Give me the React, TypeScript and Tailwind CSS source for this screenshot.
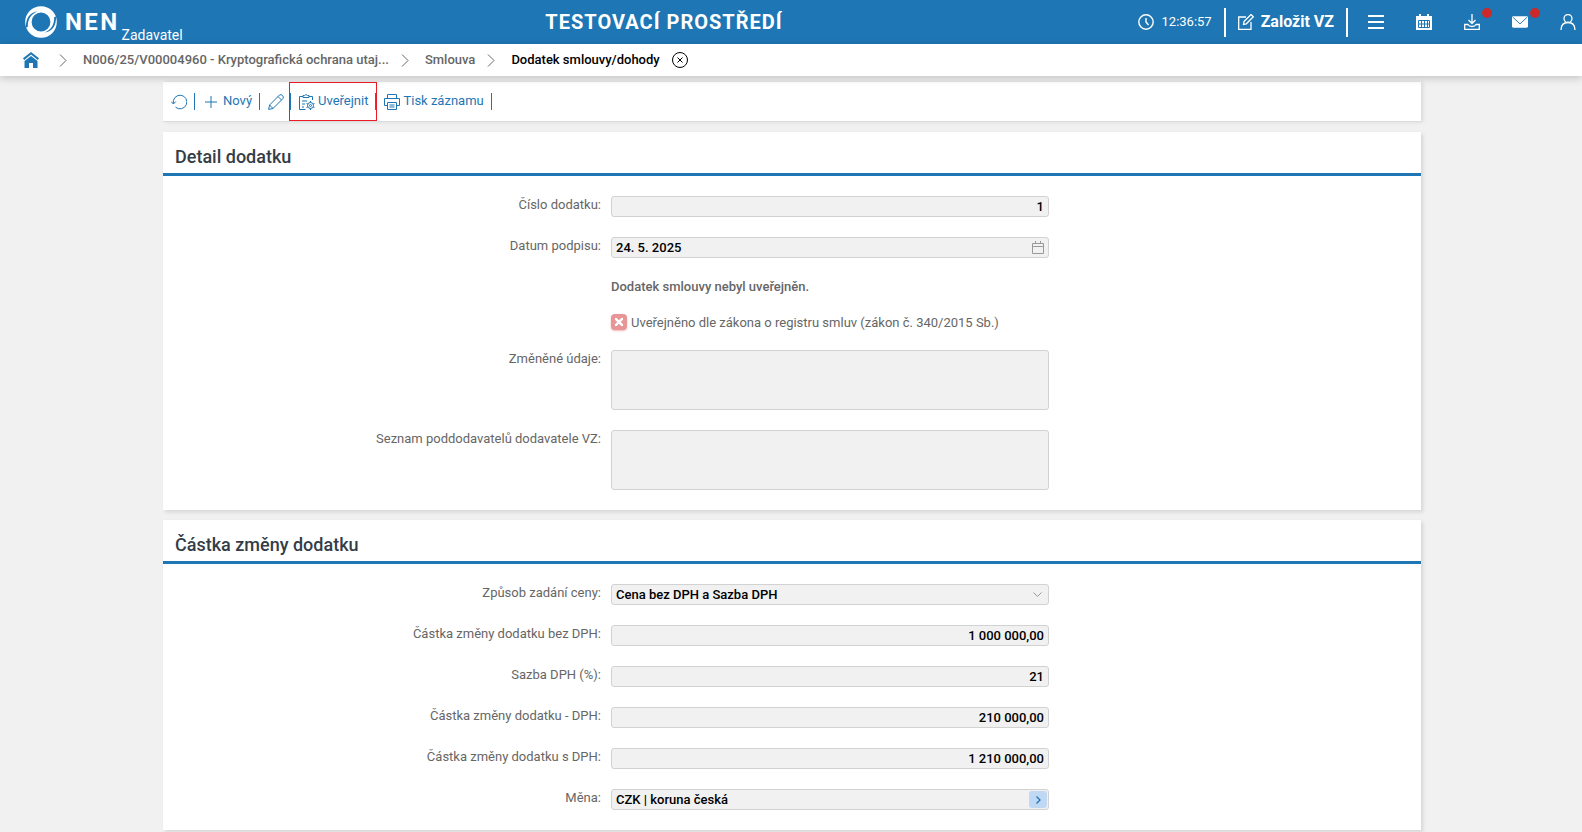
import React from 'react';

interface FieldProps {
  id: string;
  label: string;
  children: React.ReactNode;
}

interface CrumbProps {
  text: string;
}

const inputClass =
  'block h-[21px] w-full rounded-[3px] border border-[#d2d2d2] bg-[#f1f1f1] px-1 text-[13px] font-medium text-black';

const textareaClass =
  'block h-[60px] w-full resize-none rounded-[3px] border border-[#d2d2d2] bg-[#f1f1f1]';

const amounts = [
  { id: 'amountNet', label: 'Částka změny dodatku bez DPH', value: '1 000 000,00' },
  { id: 'vatRate', label: 'Sazba DPH (%)', value: '21' },
  { id: 'amountVat', label: 'Částka změny dodatku - DPH', value: '210 000,00' },
  { id: 'amountGross', label: 'Částka změny dodatku s DPH', value: '1 210 000,00' },
];

const Field: React.FC<FieldProps> = ({ id, label, children }) => (
  <div className="grid grid-cols-[438px_438px] gap-[10px]">
    <label htmlFor={id} className="text-right text-[13px] leading-[18px] text-[#666]">
      {label}:
    </label>
    <div className="relative">{children}</div>
  </div>
);

const Panel: React.FC<{ title: string; children: React.ReactNode }> = ({ title, children }) => (
  <section className="bg-white shadow-[2px_2px_4px_rgba(0,0,0,0.12)]">
    <h2 className="border-b-[3px] border-[#1e76b4] px-3 pt-[13px] pb-1 text-[18px] leading-6 font-medium text-[#333d47]">
      {title}
    </h2>
    <div className="flex flex-col gap-5 py-5">{children}</div>
  </section>
);

const Chevron = () => (
  <svg className="mr-1 h-[13px] w-2 shrink-0" viewBox="0 0 8 13" fill="none" stroke="#666">
    <path d="M1 .500 7 6.500 1 12.500" />
  </svg>
);

const Crumb: React.FC<CrumbProps> = ({ text }) => (
  <a href="#" className="text-[13px] font-medium text-[#666]">
    {text}
  </a>
);

const Divider = () => <span className="h-[17px] w-px bg-[#1e76b4]" />;

const App: React.FC = () => {
  return (
    <div className="min-h-screen bg-[#f1f1f1] font-[Roboto,sans-serif]">
      <header className="relative flex h-11 items-center justify-between bg-[#1e76b4] pl-[25px] text-white">
        <div className="flex h-full items-center">
          <svg className="h-8 w-8" viewBox="0 0 32 32" fill="none">
            <circle cx="16" cy="16" r="12.6" stroke="#fff" strokeWidth="6.4" />
            <path d="M1 21.500C.500 12 5 6.500 12.500 5.500C6.500 7.500 2.500 13 2.800 21z" fill="#1e76b4" />
            <path d="M31 10.500C31.500 20 27 25.500 19.500 26.500C25.500 24.500 29.500 19 29.200 11z" fill="#1e76b4" />
          </svg>
          <span className="pl-2 text-[24px] font-bold tracking-widest">NEN</span>
          <span className="self-end pl-[2px] text-[14px] leading-[18px]">Zadavatel</span>
        </div>
        <h1 className="absolute inset-x-0 mx-auto w-fit pr-[254px] text-[20px] font-bold tracking-wider">
          TESTOVACÍ PROSTŘEDÍ
        </h1>
        <div className="flex items-center">
          <svg className="h-4 w-4" viewBox="0 0 16 16" fill="none" stroke="#fff" strokeWidth="1.400">
            <circle cx="8" cy="8" r="7.200" />
            <path d="M8 4v4l2.500 3" />
          </svg>
          <span className="pr-3 pl-2 text-[13px]">12:36:57</span>
          <span className="h-[29px] w-[2px] bg-white" />
          <button className="flex items-center px-3">
            <svg className="h-4 w-4" viewBox="0 0 16 16" fill="none" stroke="#fff" strokeWidth="1.300">
              <path d="M8 3H.700v12.300h12.300V8" />
              <path d="m6 7.500 7-7 2.300 2.300-7 7-2.800.700z" />
            </svg>
            <span className="pl-[7px] text-[16px] font-bold">Založit VZ</span>
          </button>
          <span className="h-[29px] w-[2px] bg-white" />
          <div className="flex items-center gap-8 pl-5">
            <button aria-label="Menu">
              <svg className="h-4 w-4" viewBox="0 0 16 16" stroke="#fff" strokeWidth="2">
                <path d="M0 2h16M0 8h16M0 14h16" />
              </svg>
            </button>
            <button aria-label="Kalendář">
              <svg className="h-4 w-4" viewBox="0 0 16 16">
                <path fill="#fff" d="M0 2h3V0h2v2h6V0h2v2h3v14H0z" />
                <path stroke="#1e76b4" fill="none" d="M2.500 6.500h11v7h-11zM5.500 6.500v7M8.500 6.500v7M11.500 6.500v7M2.500 10h11" />
              </svg>
            </button>
            <button aria-label="Stažené soubory" className="relative">
              <svg className="h-4 w-4" viewBox="0 0 16 16" fill="none" stroke="#fff" strokeWidth="1.300">
                <path d="M8 0v9M4.500 6 8 9.500 11.500 6M.700 10.500H4q1 2 4 2t4-2h3.300v4.800H.700z" />
              </svg>
              <span className="absolute -top-[6px] left-[18px] h-[10px] w-[10px] rounded-full bg-[#cc2a2a]" />
            </button>
            <button aria-label="Zprávy" className="relative">
              <svg className="h-4 w-4" viewBox="0 0 17 16">
                <rect y="2" width="17" height="12" rx="1.500" fill="#fff" />
                <path d="m1 3 7.500 7L16 3" fill="none" stroke="#1e76b4" />
              </svg>
              <span className="absolute -top-[6px] left-[18px] h-[10px] w-[10px] rounded-full bg-[#cc2a2a]" />
            </button>
            <button aria-label="Uživatel" className="pr-[6px]">
              <svg className="h-4 w-4" viewBox="0 0 16 16" fill="none" stroke="#fff" strokeWidth="1.300">
                <circle cx="8" cy="4.500" r="4" />
                <path d="M1 16c0-5 3-7.500 7-7.500s7 2.500 7 7.500" />
              </svg>
            </button>
          </div>
        </div>
      </header>

      <nav className="relative flex h-8 items-center gap-3 bg-white pl-[23px] shadow-[0_2px_8px_rgba(0,0,0,0.2)]">
        <a href="#" aria-label="Domů" className="pr-2">
          <svg className="h-4 w-4" viewBox="0 0 16 16" fill="#1e76b4">
            <path d="M8 0 0 6.300 1.200 8 8 2.600 14.800 8 16 6.300z" />
            <path d="M8 4 1.500 9v7H6v-5h4v5h4.500V9z" />
          </svg>
        </a>
        <Chevron />
        <Crumb text="N006/25/V00004960 - Kryptografická ochrana utaj..." />
        <Chevron />
        <Crumb text="Smlouva" />
        <Chevron />
        <span className="text-[13px] font-medium text-black">Dodatek smlouvy/dohody</span>
        <button aria-label="Zavřít">
          <svg className="h-4 w-4" viewBox="0 0 16 16" fill="none" stroke="#000">
            <circle cx="8" cy="8" r="7.500" />
            <path d="m5.500 5.500 5 5m0-5-5 5" />
          </svg>
        </button>
      </nav>

      <main className="flex flex-col gap-[10px] pt-[6px] pr-[161px] pl-[163px]">
        <div className="flex h-10 items-center border-b border-[#dcdcdc] bg-white px-2 text-[13px] leading-[18px] text-[#1e76b4] shadow-[2px_0_4px_rgba(0,0,0,0.1)]">
          <button aria-label="Obnovit" className="pr-[7px]">
            <svg className="h-4 w-4" viewBox="0 0 16 16" fill="none" stroke="currentColor">
              <path d="M2.400 9.500A6.800 6.800 0 1 1 4.500 13.100M0 7.500l2.400 2.500 2.400-2.500" />
            </svg>
          </button>
          <Divider />
          <button className="flex items-center gap-[6px] pr-[7px] pl-[10px]">
            <svg className="h-3 w-3" viewBox="0 0 12 12" stroke="currentColor">
              <path d="M6 0v12M0 6h12" />
            </svg>
            <span className="pb-[2px]">Nový</span>
          </button>
          <Divider />
          <button aria-label="Upravit" className="pr-[5px] pl-2">
            <svg className="h-4 w-4" viewBox="0 0 16 16" fill="none" stroke="currentColor">
              <path d="m.600 15.400 1-4.400L11.500 1q1.500-1 3 .500t.500 3L5 14.500zM10 2.500 13.500 6M1.600 11 5 14.500" />
            </svg>
          </button>
          <div className="flex h-full items-center border border-[#ed1c24]">
            <Divider />
            <button className="flex items-center gap-[3px] pr-[7px] pl-2">
              <svg className="h-4 w-4" viewBox="0 0 16 16" fill="none" stroke="currentColor">
                <path d="M4 2.500H.500v13h6M10 2.500h3.500V6M4 3.500v-2h1.500q1.500-2 3 0H10v2zM3 7h5M3 10h3M3 13h2" />
                <circle cx="11.500" cy="11.500" r="3" />
                <circle cx="11.500" cy="11.500" r="1" />
                <path d="M11.500 7v1.500m0 6V16M7.500 9.500l1.500.700m5 2.600 1.500.700m0-4-1.500.700m-5 2.600-1.500.700" />
              </svg>
              <span className="pb-[2px]">Uveřejnit</span>
            </button>
            <Divider />
          </div>
          <button className="flex items-center gap-[3px] px-[7px]">
            <svg className="h-4 w-4" viewBox="0 0 16 16" fill="none" stroke="currentColor">
              <path d="M3.500 4.500v-4h9v4M3.500 11.500h-3v-7h15v7h-3M3.500 8.500h9v7h-9zM5.500 11h5M5.500 13h5" />
            </svg>
            <span className="pb-[2px]">Tisk záznamu</span>
          </button>
          <Divider />
        </div>

        <Panel title="Detail dodatku">
          <Field id="number" label="Číslo dodatku">
            <input id="number" readOnly value="1" className={`${inputClass} text-right`} />
          </Field>
          <Field id="signed" label="Datum podpisu">
            <input id="signed" readOnly value="24. 5. 2025" className={inputClass} />
            <svg className="absolute top-1 right-[5px] h-[13px] w-3" viewBox="0 0 12 13" fill="none" stroke="#999">
              <path d="M.500 2.500h11v10H.500zM.500 5.500h11M3.500 0v3M8.500 0v3" />
            </svg>
          </Field>
          <p className="ml-[448px] h-4 text-[13px] leading-[18px] font-medium text-[#666]">
            Dodatek smlouvy nebyl uveřejněn.
          </p>
          <label className="ml-[448px] flex h-4 gap-1 text-[13px] leading-[18px] text-[#666]">
            <span className="relative h-4 w-4">
              <input
                type="checkbox"
                className="block h-4 w-4 appearance-none rounded-[4px] bg-[#e69696] shadow-[0_1px_2px_rgba(220,80,80,0.4)]"
              />
              <svg className="pointer-events-none absolute top-1 left-1 h-2 w-2" viewBox="0 0 8 8" stroke="#fff" strokeWidth="2.400">
                <path d="m0 0 8 8M8 0 0 8" />
              </svg>
            </span>
            Uveřejněno dle zákona o registru smluv (zákon č. 340/2015 Sb.)
          </label>
          <Field id="changed" label="Změněné údaje">
            <textarea id="changed" readOnly className={textareaClass} />
          </Field>
          <Field id="subs" label="Seznam poddodavatelů dodavatele VZ">
            <textarea id="subs" readOnly className={textareaClass} />
          </Field>
        </Panel>

        <Panel title="Částka změny dodatku">
          <Field id="priceMode" label="Způsob zadání ceny">
            <select id="priceMode" className={`${inputClass} appearance-none pb-[2px]`}>
              <option>Cena bez DPH a Sazba DPH</option>
            </select>
            <svg className="pointer-events-none absolute top-2 right-[7px] h-[6px] w-[9px]" viewBox="0 0 9 6" fill="none" stroke="#999">
              <path d="m.500.500 4 4 4-4" />
            </svg>
          </Field>
          {amounts.map(item => (
            <Field key={item.id} id={item.id} label={item.label}>
              <input id={item.id} readOnly value={item.value} className={`${inputClass} text-right`} />
            </Field>
          ))}
          <Field id="currency" label="Měna">
            <input id="currency" readOnly value="CZK | koruna česká" className={inputClass} />
            <button
              aria-label="Detail měny"
              className="absolute top-[2px] right-[2px] flex h-[17px] w-[18px] items-center justify-center rounded-[3px] bg-[#c0d8f4]"
            >
              <svg className="h-2 w-[5px]" viewBox="0 0 5 8" fill="none" stroke="#1e76b4" strokeWidth="1.300">
                <path d="m.500.500 3.500 3.500-3.500 3.500" />
              </svg>
            </button>
          </Field>
        </Panel>
      </main>
    </div>
  );
};

export default App;
